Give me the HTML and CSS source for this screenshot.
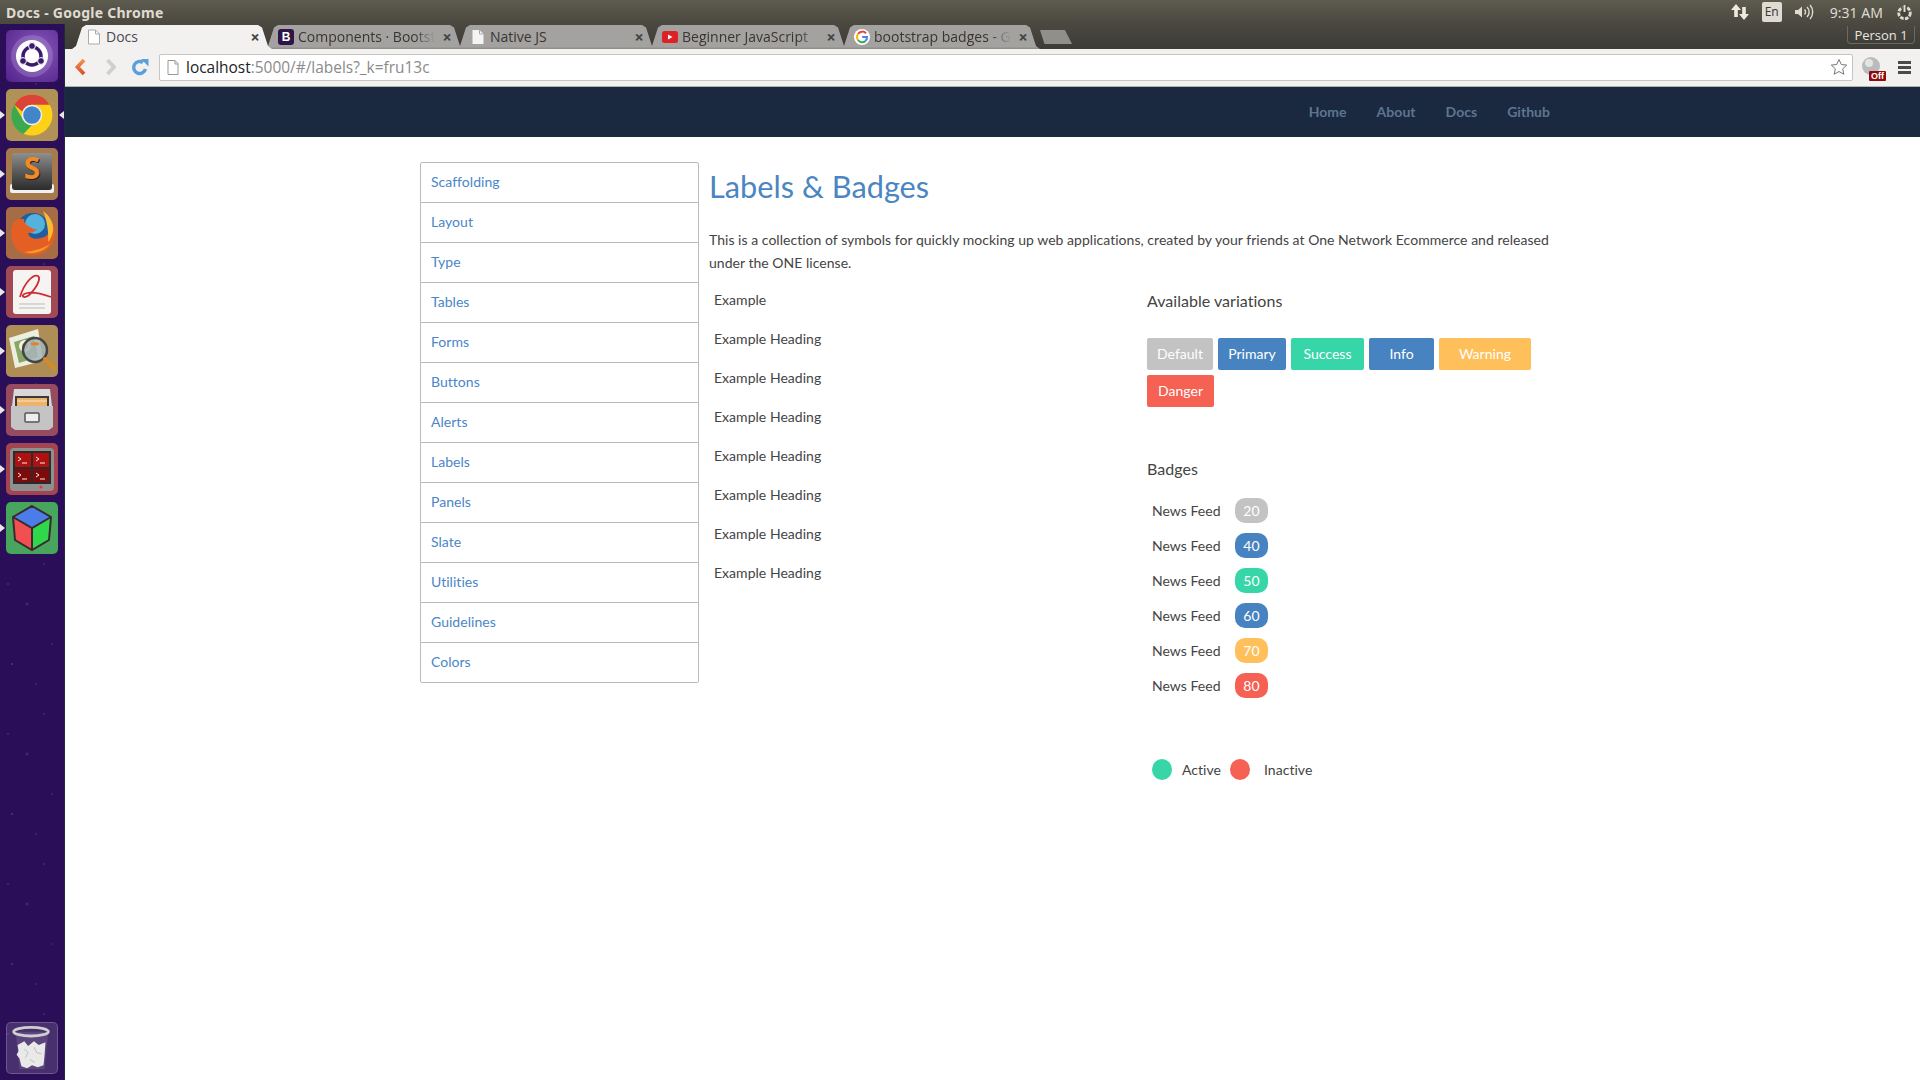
FILE: index.html
```html
<!DOCTYPE html>
<html lang="en">
<head>
<meta charset="utf-8">
<title>Docs - Google Chrome</title>
<link rel="stylesheet" href="styles.css">
</head>
<body>
<div class="screen">
  <header class="panel">
    <span class="panel-title">Docs - Google Chrome</span>
    <div class="indicators">
      <svg class="ind-arrows" width="18" height="16" viewBox="0 0 18 16"><path d="M5 0l5 6H6.800v7H3.200V6H0zM13 16l-5-6h3.200V3h3.600v7H18z" fill="#eeeae0"/></svg>
      <span class="ind-lang">En</span>
      <svg class="ind-vol" width="20" height="16" viewBox="0 0 20 16"><path d="M0 6h3l4-3.500v11L3 10H0z" fill="#dfdbd2"/><path d="M9.500 5.500a3.500 3.500 0 0 1 0 5M12 3a7 7 0 0 1 0 10M15 1a10.500 10.500 0 0 1 0 14" fill="none" stroke="#dfdbd2" stroke-width="1.400"/></svg>
      <span class="ind-time">9:31 AM</span>
      <svg class="ind-gear" width="17" height="17" viewBox="0 0 17 17"><circle cx="8.500" cy="9" r="5.800" fill="none" stroke="#dfdbd2" stroke-width="2.800" stroke-dasharray="3.500 1.400"/><circle cx="8.500" cy="9" r="3.500" fill="#45433b"/><path d="M8.500 1v7" stroke="#45433b" stroke-width="4"/><path d="M8.500 1v7" stroke="#dfdbd2" stroke-width="2"/></svg>
    </div>
  </header>
  <div class="desktop">
    <nav class="launcher">
      <div class="launcher-top">
        <div class="tile tile-ubuntu">
          <svg viewBox="0 0 52 52"><circle cx="26" cy="26" r="21" fill="#fff" fill-opacity=".16"/><circle cx="26" cy="26" r="16" fill="#fff"/><circle cx="26" cy="26" r="9" fill="none" stroke="#3d1a70" stroke-width="3.500"/><circle cx="26" cy="16" r="3.400" fill="#3d1a70" stroke="#fff"/><circle cx="35" cy="31" r="3.400" fill="#3d1a70" stroke="#fff"/><circle cx="17" cy="31" r="3.400" fill="#3d1a70" stroke="#fff"/></svg>
        </div>
        <div class="tile tile-chrome pip pip-both">
          <svg viewBox="0 0 52 52"><circle cx="26" cy="26" r="20.500" fill="#fcd116"/><path d="M26 5.500a20.500 20.500 0 0 1 17.800 10.300H26a10 10 0 0 0-9.500 7L8.200 15.800A20.500 20.500 0 0 1 26 5.500z" fill="#db4437"/><path d="M8.200 15.800l8.800 15a10 10 0 0 0 9 5.200l-8.600 9.100A20.500 20.500 0 0 1 8.200 15.800z" fill="#3ba94f"/><circle cx="26" cy="26" r="9.500" fill="#4285c8" stroke="#eee" stroke-width="1.500"/></svg>
        </div>
        <div class="tile tile-sublime pip">
          <svg viewBox="0 0 52 52"><defs><linearGradient id="subl" x1="0" y1="0" x2="0" y2="1"><stop offset="0" stop-color="#8f8f8f"/><stop offset=".55" stop-color="#555"/><stop offset="1" stop-color="#2c2c2c"/></linearGradient></defs><rect x="4" y="36" width="44" height="9" rx="2" fill="#f0f0f0"/><rect x="6" y="5" width="40" height="37" rx="3" fill="url(#subl)"/><text x="27" y="32" class="svg-s svg-s-shadow">S</text><text x="26" y="31" class="svg-s">S</text></svg>
        </div>
        <div class="tile tile-firefox pip">
          <svg viewBox="0 0 52 52"><circle cx="27" cy="23" r="17" fill="#1f5e9f"/><circle cx="29" cy="17" r="10" fill="#54b3dc"/><path d="M7 16c-4 10-2 22 7 29 10 6 25 4 31-6 5-7 5-16 2-24-1 8-5 15-12 16-6 2-12 0-13-5 4 0 8-2 9-4-4 1-6-2-9-3-3-2-4-4-4-7-4 0-9 0-11 4z" fill="#e45f24"/><path d="M37 4c7 5 11 12 10 20-1 5-3 9-5 11 1-9-1-22-5-31z" fill="#f8bb34"/><path d="M18 45c9 3 20 0 26-8-6 4-15 7-26 8z" fill="#f39c2a"/></svg>
        </div>
        <div class="tile tile-acrobat pip">
          <svg viewBox="0 0 52 52"><rect x="7" y="4" width="38" height="44" rx="3" fill="#f6f4f2"/><path d="M14 31C18 17 27 8 32 10c5 3-8 22-14 21-4-1 1-9 27 0" fill="none" stroke="#cf2b30" stroke-width="1.800"/><path d="M13 38h26M13 42h26" stroke="#bbb"/></svg>
        </div>
        <div class="tile tile-viewer pip">
          <svg viewBox="0 0 52 52"><path d="M3 13l29-9 5 32-28 7z" fill="#eceee0"/><path d="M8 17l20-6 4 21-19 6z" fill="#87a866"/><circle cx="19" cy="21" r="6" fill="#f6f2e4"/><circle cx="19" cy="21" r="2.800" fill="#e59a2c"/><circle cx="29" cy="25" r="12" fill="#a6b5b8" fill-opacity=".85" stroke="#444" stroke-width="2.500"/><path d="M24 19q5-4 10 0-5 3-10 0z" fill="#e0832a"/><path d="M39 34l9 9" stroke="#d58a24" stroke-width="4" stroke-linecap="round"/></svg>
        </div>
        <div class="tile tile-cabinet pip">
          <svg viewBox="0 0 52 52"><path d="M8 5h36l2 17H6z" fill="#d8d8d8"/><rect x="9" y="12" width="34" height="11" fill="#3a3a3a"/><rect x="11" y="14" width="30" height="9" fill="#eeb36a"/><path d="M11 17h30" stroke="#fbe3bd"/><path d="M5 22h42v21l-4 3H9l-4-3z" fill="#c4c4c4"/><rect x="19" y="29" width="14" height="9" rx="1" fill="#eee" stroke="#555" stroke-width="1.500"/></svg>
        </div>
        <div class="tile tile-terminal pip">
          <svg viewBox="0 0 52 52"><rect x="4" y="5" width="44" height="43" rx="4" fill="#8f8f8f"/><rect x="7" y="8" width="38" height="33" fill="#2b2b2b"/><path d="M9 10h16v14H9zM27 10h16v14H27z" fill="#b01010"/><path d="M9 26h16v13H9zM27 26h16v13H27z" fill="#7f0a0a"/><path d="M12 14l3 2-3 2M30 14l3 2-3 2M12 30l3 2-3 2M30 30l3 2-3 2M16 20h5M34 20h5M16 36h5M34 36h5" fill="none" stroke="#eee"/><circle cx="35" cy="44" r="1.500" fill="#e33"/></svg>
        </div>
        <div class="tile tile-cube pip">
          <svg viewBox="0 0 52 52"><path d="M26 4l19 11-19 11L7 15z" fill="#4a7de8"/><path d="M7 15l19 11v22L9 38z" fill="#f25050"/><path d="M45 15L26 26v22l17-10z" fill="#2fd84a"/><path d="M26 4l19 11-2 23-17 10L9 38 7 15zM7 15l19 11 19-11M26 26v22" fill="none" stroke="#3a2a30" stroke-width="2"/></svg>
        </div>
      </div>
      <div class="tile tile-trash">
        <svg viewBox="0 0 52 52"><path d="M9 9h34l-4 39H13z" fill="#fff" fill-opacity=".1"/><ellipse cx="25" cy="9" rx="18" ry="4.500" fill="none" stroke="#cfcfcf" stroke-width="3"/><path d="M11 23l7-4 4 5 6-5 5 4 7-3-1 14-1 10-6 2-6-2-5 3-6-2-2-8-3-4 2-4z" fill="#e9e9e9"/><path d="M18 27l4 4-3 5M28 25l3 6 5 1M24 38l5 3" fill="none" stroke="#bdbdbd"/></svg>
      </div>
    </nav>
    <div class="browser">
      <div class="tabstrip">
        <div class="tab tab-active">
          <svg class="fav" width="16" height="16" viewBox="0 0 16 16"><path d="M2.500 1h7l4 4v10h-11z" fill="#fff" stroke="#aaa"/><path d="M9.500 1v4h4" fill="none" stroke="#aaa"/></svg>
          <span class="tab-label">Docs</span>
          <span class="tab-close">×</span>
        </div>
        <div class="tab">
          <span class="fav fav-b">B</span>
          <span class="tab-label tab-fade">Components · Bootstrap</span>
          <span class="tab-close">×</span>
        </div>
        <div class="tab">
          <svg class="fav" width="16" height="16" viewBox="0 0 16 16"><path d="M2.500 1h7l4 4v10h-11z" fill="#f4f4f4"/><path d="M9.500 1v4h4" fill="none" stroke="#aaa"/></svg>
          <span class="tab-label">Native JS</span>
          <span class="tab-close">×</span>
        </div>
        <div class="tab">
          <svg class="fav" width="16" height="12" viewBox="0 0 16 12"><rect width="16" height="12" rx="2.500" fill="#dc2127"/><path d="M6 3.500l4.500 2.500L6 8.500z" fill="#fff"/></svg>
          <span class="tab-label tab-fade">Beginner JavaScript</span>
          <span class="tab-close">×</span>
        </div>
        <div class="tab">
          <svg class="fav" width="16" height="16" viewBox="0 0 16 16"><circle cx="8" cy="8" r="8" fill="#fff"/><path d="M12 4.300A5 5 0 0 0 4 5" fill="none" stroke="#ea4335" stroke-width="2"/><path d="M4 5a5 5 0 0 0 0 6" fill="none" stroke="#fbbc05" stroke-width="2"/><path d="M4 11a5 5 0 0 0 7.500.900" fill="none" stroke="#34a853" stroke-width="2"/><path d="M11.500 11.900A5 5 0 0 0 13 8H8.200" fill="none" stroke="#4285f4" stroke-width="2"/></svg>
          <span class="tab-label tab-fade">bootstrap badges - Google</span>
          <span class="tab-close">×</span>
        </div>
        <div class="tab-new"></div>
        <span class="person">Person 1</span>
      </div>
      <div class="toolbar">
        <svg class="tool tool-back" width="14" height="18" viewBox="0 0 14 18"><defs><linearGradient id="backg" x1="0" y1="0" x2="0" y2="1"><stop offset="0" stop-color="#f0934f"/><stop offset="1" stop-color="#d9502b"/></linearGradient></defs><path d="M11 2L4.500 9l6.500 7" fill="none" stroke="url(#backg)" stroke-width="3.800"/></svg>
        <svg class="tool tool-fwd" width="14" height="18" viewBox="0 0 14 18"><path d="M3.500 2L10 9l-6.500 7" fill="none" stroke="#cfcfcc" stroke-width="3.800"/></svg>
        <svg class="tool tool-reload" width="18" height="18" viewBox="0 0 18 18"><path d="M14.500 11a6 6 0 1 1-2.500-6.500" fill="none" stroke="#5a9fdc" stroke-width="3.400"/><path d="M10 1h7.500v7.500z" fill="#5a9fdc"/></svg>
        <div class="omnibox">
          <svg class="omni-doc" width="12" height="15" viewBox="0 0 12 15"><path d="M1 .5h7L11 3.500V14.500H1z" fill="#fff" stroke="#999"/><path d="M8 .5V4h3" fill="none" stroke="#999"/></svg>
          <span class="url"><span class="url-host">localhost</span>:5000/#/labels?_k=fru13c</span>
          <svg class="star" width="18" height="18" viewBox="0 0 18 18"><path d="M9 1.500l2.300 5 5.400.600-4 3.700 1.100 5.400L9 13.500l-4.800 2.700 1.100-5.400-4-3.700 5.400-.6z" fill="#fff" stroke="#777"/></svg>
        </div>
        <div class="ext">
          <svg width="20" height="20" viewBox="0 0 20 20"><circle cx="9" cy="9" r="9" fill="#b9bcbd"/><circle cx="7" cy="6" r="4" fill="#e3e5e5"/></svg>
          <span class="ext-off">Off</span>
        </div>
        <div class="hamburger"><i></i><i></i><i></i></div>
      </div>
      <div class="navbar">
        <a class="nav-link">Home</a>
        <a class="nav-link">About</a>
        <a class="nav-link">Docs</a>
        <a class="nav-link">Github</a>
      </div>
      <main class="page">
        <ul class="side">
          <li>Scaffolding</li>
          <li>Layout</li>
          <li>Type</li>
          <li>Tables</li>
          <li>Forms</li>
          <li>Buttons</li>
          <li>Alerts</li>
          <li>Labels</li>
          <li>Panels</li>
          <li>Slate</li>
          <li>Utilities</li>
          <li>Guidelines</li>
          <li>Colors</li>
        </ul>
        <section class="content">
          <h1 class="title">Labels &amp; Badges</h1>
          <p class="intro">This is a collection of symbols for quickly mocking up web applications, created by your friends at One Network Ecommerce and released under the ONE license.</p>
          <div class="columns">
            <div class="examples">
              <div>Example</div>
              <div>Example Heading</div>
              <div>Example Heading</div>
              <div>Example Heading</div>
              <div>Example Heading</div>
              <div>Example Heading</div>
              <div>Example Heading</div>
              <div>Example Heading</div>
            </div>
            <div class="variations">
              <h2 class="sub">Available variations</h2>
              <div class="labels">
                <span class="label l-default c-default">Default</span>
                <span class="label l-primary c-primary">Primary</span>
                <span class="label l-success c-success">Success</span>
                <span class="label l-info c-info">Info</span>
                <span class="label l-warning c-warning">Warning</span>
                <span class="label l-danger c-danger">Danger</span>
              </div>
              <h2 class="sub sub-badges">Badges</h2>
              <div class="feed">
                <div class="feed-row"><span>News Feed</span><span class="badge c-default">20</span></div>
                <div class="feed-row"><span>News Feed</span><span class="badge c-primary">40</span></div>
                <div class="feed-row"><span>News Feed</span><span class="badge c-success">50</span></div>
                <div class="feed-row"><span>News Feed</span><span class="badge c-info">60</span></div>
                <div class="feed-row"><span>News Feed</span><span class="badge c-warning">70</span></div>
                <div class="feed-row"><span>News Feed</span><span class="badge c-danger">80</span></div>
              </div>
              <div class="status">
                <span class="dot c-success"></span><span class="status-a">Active</span>
                <span class="dot c-danger"></span><span class="status-i">Inactive</span>
              </div>
            </div>
          </div>
        </section>
      </main>
    </div>
  </div>
</div>
</body>
</html>
```

FILE: styles.css
```css
* { box-sizing: border-box; }
html, body { margin: 0; padding: 0; height: 100%; background: #fff; }
body { font-family: "Lato", "Liberation Sans", sans-serif; font-size: 14px; letter-spacing: .03px; color: #444; overflow: hidden; }
.screen { width: 1920px; height: 1080px; display: flex; flex-direction: column; }

.panel { height: 24px; flex: none; display: flex; align-items: center; justify-content: space-between; padding: 0 7px 0 6px; background: linear-gradient(#5e5b4f, #4a483f); color: #dfdbd2; font-family: "Noto Sans", sans-serif; }
.panel-title { font-size: 14px; font-weight: 700; letter-spacing: .25px; }
.indicators { display: flex; align-items: center; }
.ind-arrows { margin-right: 13px; }
.ind-lang { width: 20px; height: 20px; background: #dfdbd2; border-radius: 2px; color: #3c3b37; font-size: 12px; line-height: 20px; text-align: center; margin-right: 13px; }
.ind-vol { margin-right: 15px; }
.ind-time { font-size: 14px; margin-right: 13px; }
.ind-gear { display: block; }

.desktop { flex: 1; display: flex; min-height: 0; }
.launcher { width: 65px; flex: none; display: flex; flex-direction: column; justify-content: space-between; padding: 6px 0; background-color: #2a0e57;
  background-image: radial-gradient(1.500px 1.500px at 12px 40px, #5a4590, transparent), radial-gradient(1px 1px at 44px 90px, #6a55a0, transparent), radial-gradient(2px 2px at 27px 130px, #4a3680, transparent), radial-gradient(1px 1px at 52px 20px, #5a4590, transparent), radial-gradient(1px 1px at 8px 110px, #6a55a0, transparent), radial-gradient(1.500px 1.500px at 36px 60px, #4a3680, transparent);
  background-size: 65px 150px; border-right: 1px solid #1e2b3a; }
.launcher-top { display: flex; flex-direction: column; gap: 7px; }
.tile { position: relative; width: 52px; height: 52px; margin-left: 6px; border-radius: 5px; flex: none; }
.tile svg { display: block; width: 52px; height: 52px; }
.pip::before { content: ""; position: absolute; left: -6px; top: 22px; border-left: 5px solid #e8e8e8; border-top: 4px solid transparent; border-bottom: 4px solid transparent; }
.pip-both::after { content: ""; position: absolute; left: 53px; top: 22px; border-right: 5px solid #e8e8e8; border-top: 4px solid transparent; border-bottom: 4px solid transparent; }
.tile-ubuntu { background: radial-gradient(circle at 60% 40%, #8a5bbd, #51208a); }
.tile-chrome { background: #b09258; }
.tile-sublime { background: #a67a4d; }
.tile-firefox { background: #a66c46; }
.tile-acrobat { background: #a14a55; }
.tile-viewer { background: #ae8e55; }
.tile-cabinet { background: #964b5e; }
.tile-terminal { background: #a34450; }
.tile-cube { background: #48a55e; }
.tile-trash { background: rgba(255, 255, 255, .14); border: 1px solid rgba(255, 255, 255, .2); }
.tile-trash svg { width: 50px; height: 50px; }
.svg-s { font-family: "Noto Sans", sans-serif; font-size: 30px; font-weight: 700; fill: #f28a22; text-anchor: middle; }
.svg-s-shadow { fill: #1d1d1d; }

.browser { flex: 1; display: flex; flex-direction: column; min-width: 0; }
.tabstrip { position: relative; height: 25px; flex: none; display: flex; align-items: flex-end; padding-left: 7px; background: linear-gradient(#4a483f, #3c3b37); font-family: "Open Sans", sans-serif; letter-spacing: 0; }
.tab { width: 200px; height: 24px; flex: none; margin-right: -8px; padding: 0 11px 1px 14px; display: flex; align-items: center; background: linear-gradient(#a3a2a0 90%, #8a8986); clip-path: polygon(0 100%, 4px 88%, 10px 10%, 14px 0, calc(100% - 14px) 0, calc(100% - 10px) 10%, calc(100% - 4px) 88%, 100% 100%); font-size: 14px; color: #3a3530; }
.tab-active { background: #f2f1f0; z-index: 2; color: #4a4a50; }
.fav { flex: none; margin-right: 4px; }
.fav-b { width: 16px; height: 16px; border-radius: 3px; background: #2e1547; color: #fff; font-size: 12px; font-weight: 700; line-height: 16px; text-align: center; font-family: "Liberation Sans", sans-serif; }
.tab-label { flex: 1; min-width: 0; overflow: hidden; white-space: nowrap; }
.tab-fade { -webkit-mask-image: linear-gradient(90deg, #000 85%, transparent); mask-image: linear-gradient(90deg, #000 85%, transparent); }
.tab-close { flex: none; width: 12px; margin-left: 6px; font-size: 16px; font-weight: 700; line-height: 1; text-align: center; color: #444; }
.tab-new { width: 32px; height: 14px; flex: none; margin: 0 0 5px 8px; background: #908f8b; clip-path: polygon(0 0, 78% 0, 100% 100%, 14% 100%); }
.person { position: absolute; right: 5px; top: 2px; width: 68px; height: 18px; border: 1px solid #6a6962; border-top: 0; border-radius: 0 0 4px 4px; color: #e8e6e0; font-size: 13px; line-height: 18px; text-align: center; }

.toolbar { height: 38px; flex: none; display: flex; align-items: center; padding: 0 0 1px 8px; background: #f2f1f0; border-bottom: 1px solid #b3b2ae; font-family: "Open Sans", sans-serif; letter-spacing: 0; }
.tool { flex: none; }
.tool-back { margin-right: 17px; }
.tool-fwd { margin-right: 13px; }
.tool-reload { margin-right: 10px; }
.omnibox { width: 1694px; height: 27px; flex: none; display: flex; align-items: center; padding: 0 4px 0 7px; background: #fff; border: 1px solid #c6c5c1; border-radius: 2px; }
.omni-doc { margin-right: 7px; flex: none; }
.url { flex: 1; font-size: 15.450px; color: #8b8b8b; }
.url-host { color: #222; }
.ext { position: relative; width: 20px; height: 20px; margin-left: 9px; flex: none; }
.ext svg { display: block; }
.ext-off { position: absolute; left: 7px; top: 14px; width: 17px; height: 10px; background: #8e0b0b; color: #fff; border-radius: 1px; font-size: 9px; font-weight: 700; line-height: 10px; text-align: center; font-family: "Liberation Sans", sans-serif; }
.hamburger { margin-left: 16px; width: 13px; display: flex; flex-direction: column; gap: 2px; flex: none; }
.hamburger i { display: block; height: 3px; background: #4a4a4a; }

.navbar { height: 50px; flex: none; display: flex; align-items: center; justify-content: flex-end; gap: 30px; padding: 0 370px 2px 0; background: #1a2940; }
.nav-link { color: #5d7690; font-weight: 700; font-size: 14px; }

.page { flex: 1; display: flex; align-items: flex-start; padding: 25px 0 0 355px; min-height: 0; }
.side { list-style: none; margin: 0; padding: 0; width: 279px; flex: none; border: 1px solid #bbb; border-radius: 2px; }
.side li { height: 40px; line-height: 38px; padding-left: 10px; color: #4a86c8; border-bottom: 1px solid #bbb; }
.side li:last-child { height: 39px; border-bottom: 0; }
.content { width: 855px; margin-left: 10px; }
.title { margin: 0; height: 66px; padding-top: 6px; font-size: 30.700px; line-height: 38px; font-weight: 400; color: #4a86c1; }
.intro { margin: 0; line-height: 23px; }
.columns { display: grid; grid-template-columns: 438px 1fr; }
.examples { padding: 6px 0 0 5px; }
.examples div { height: 39px; line-height: 39px; }
.variations { padding-top: 16px; }
.sub { margin: 0; font-size: 16px; font-weight: 400; line-height: 22px; }
.labels { margin-top: 26px; display: flex; flex-wrap: wrap; gap: 5px; width: 400px; }
.label { height: 32px; border-radius: 2px; color: #fff; line-height: 32px; text-align: center; }
.l-default { width: 66px; }
.l-primary { width: 68px; }
.l-success { width: 73px; }
.l-info { width: 65px; }
.l-warning { width: 92px; }
.l-danger { width: 67px; }
.c-default { background: #c3c3c3; }
.c-primary { background: #4683c0; }
.c-success { background: #37d6a9; }
.c-info { background: #4683c0; }
.c-warning { background: #ffbf5a; }
.c-danger { background: #f56152; }
.sub-badges { margin-top: 51px; }
.feed { margin-top: 18px; padding-left: 5px; display: flex; flex-direction: column; gap: 10px; }
.feed-row { display: flex; align-items: center; height: 25px; gap: 13px; }
.feed-row span:first-child { width: 70px; }
.badge { width: 33px; height: 25px; border-radius: 10px; color: #fff; line-height: 25px; text-align: center; font-size: 14px; }
.status { margin-top: 61px; padding-left: 5px; display: flex; align-items: center; }
.dot { width: 20px; height: 21px; border-radius: 50%; flex: none; }
.status-a { margin: 0 10px; width: 38px; }
.status-i { margin-left: 14px; }
```
